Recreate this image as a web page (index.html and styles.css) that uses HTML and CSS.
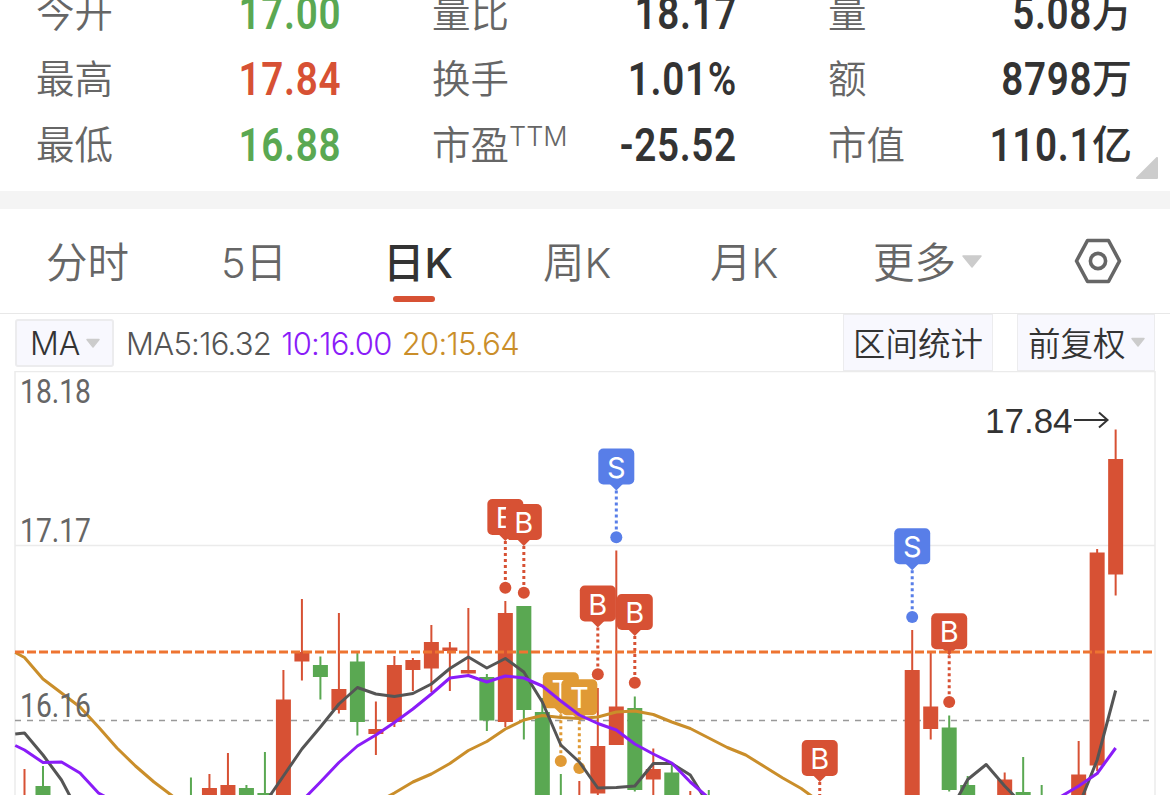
FILE: index.html
```html
<!DOCTYPE html>
<html lang="zh-CN">
<head>
    <meta charset="UTF-8">
    <meta name="viewport" content="width=device-width, initial-scale=1.0">
    <title>日K</title>
    <link rel="stylesheet" href="styles.css">
</head>
<body>

<section class="quote">
    <div class="item"><span class="label">今开</span><span class="value down"><b>17.00</b></span></div>
    <div class="item"><span class="label">量比</span><span class="value"><b>18.17</b></span></div>
    <div class="item"><span class="label">量</span><span class="value"><b>5.08</b>万</span></div>
    <div class="item"><span class="label">最高</span><span class="value up"><b>17.84</b></span></div>
    <div class="item"><span class="label">换手</span><span class="value"><b>1.01%</b></span></div>
    <div class="item"><span class="label">额</span><span class="value"><b>8798</b>万</span></div>
    <div class="item"><span class="label">最低</span><span class="value down"><b>16.88</b></span></div>
    <div class="item"><span class="label">市盈<sup>TTM</sup></span><span class="value"><b>-25.52</b></span></div>
    <div class="item"><span class="label">市值</span><span class="value"><b>110.1</b>亿</span></div>
    <svg class="corner" width="22" height="22" viewBox="0 0 22 22"><path d="M21 1V21H1Z"/></svg>
</section>

<nav class="tabs">
    <a>分时</a>
    <a>5日</a>
    <a class="active">日K</a>
    <a>周K</a>
    <a>月K</a>
    <a>更多<svg class="arrow" width="22" height="14" viewBox="0 0 22 14"><path d="M2 1H20L11 12Z"/></svg></a>
    <svg class="setting" width="48" height="46" viewBox="0 0 48 46">
        <path d="M13.5 2.5H34.5L45.5 23L34.5 43.5H13.5L2.5 23Z"/>
        <circle cx="24" cy="23" r="7.6"/>
    </svg>
</nav>

<div class="toolbar">
    <div class="btn ma-btn">MA<svg class="arrow" width="16" height="11" viewBox="0 0 16 11"><path d="M2 1.500H14L8 9Z"/></svg></div>
    <span class="ma ma5">MA5:16.32</span>
    <span class="ma ma10">10:16.00</span>
    <span class="ma ma20">20:15.64</span>
    <div class="btn range-btn">区间统计</div>
    <div class="btn right-btn">前复权<svg class="arrow" width="16" height="11" viewBox="0 0 16 11"><path d="M2 1.500H14L8 9Z"/></svg></div>
</div>

<svg id="chart" width="1170" height="424" viewBox="0 371 1170 424"></svg>

<script src="chart.js"></script>
</body>
</html>
```
FILE: styles.css
```css
* {
    margin: 0;
    padding: 0;
    box-sizing: border-box;
}
body {
    width: 1170px;
    height: 795px;
    overflow: hidden;
    background-color: #fff;
    color: #333;
    font-family: Inter, 'Noto Sans CJK SC', sans-serif;
}

/* quote */
.quote {
    position: relative;
    display: grid;
    grid-template-columns: 305px 305px 304px;
    grid-auto-rows: 66px;
    column-gap: 91px;
    height: 229px;
    margin-top: -20px;
    padding-left: 36px;
    border-bottom: 18px solid #f4f4f4;
}
.item {
    display: flex;
    justify-content: space-between;
    align-items: center;
    line-height: 64px;
    white-space: nowrap;
}
.label {
    font-size: 38.5px;
    font-weight: 350;
    color: #666;
}
.label sup {
    display: inline-block;
    font-size: 27px;
    font-weight: 300;
    line-height: 1;
    vertical-align: 13px;
}
.value {
    display: flex;
    font-size: 40px;
    font-weight: 500;
}
.value b {
    font-family: Roboto, sans-serif;
    font-size: 46px;
    font-weight: 600;
    letter-spacing: 0.8px;
    transform: scaleX(0.84);
    transform-origin: right;
}
.up {
    color: #d75134;
}
.down {
    color: #5aa852;
}
.corner {
    position: absolute;
    right: 12px;
    bottom: 12px;
    fill: #ccc;
    stroke: #ccc;
    stroke-width: 2;
    stroke-linejoin: round;
}

/* tabs */
.tabs {
    display: grid;
    grid-template-columns: 175px 162px 160px 167px 163px 201px auto;
    align-items: center;
    height: 105px;
    padding-left: 46px;
    border-bottom: 1px solid #e8e8e8;
}
.tabs a {
    position: relative;
    justify-self: start;
    display: flex;
    align-items: center;
    padding-top: 4px;
    font-size: 41.5px;
    font-weight: 350;
    line-height: 100px;
    color: #666;
    white-space: nowrap;
}
.tabs .active {
    font-weight: 500;
    color: #333;
}
.active::after {
    content: '';
    position: absolute;
    left: 10px;
    bottom: 11px;
    width: 42px;
    height: 6px;
    border-radius: 3px;
    background-color: #d75134;
}
.arrow {
    flex: none;
    fill: #ccc;
    stroke: #ccc;
    stroke-width: 1.5;
    stroke-linejoin: round;
}
.tabs .arrow {
    margin: -3px 0 0 5px;
}
.setting {
    fill: none;
    stroke: #666;
    stroke-width: 3.6;
    stroke-linejoin: round;
}

/* toolbar */
.toolbar {
    display: flex;
    align-items: center;
    height: 57px;
    padding: 0 15px;
    font-size: 32px;
    white-space: nowrap;
}
.btn {
    display: flex;
    align-items: center;
    height: 57px;
    border: 1.5px solid #ececee;
    background-color: #f8f8fe;
}
.ma-btn {
    width: 99px;
    height: 48px;
    margin: 1px 12px 0 0;
    padding-left: 13px;
    border-width: 2px;
    border-radius: 3px;
    font-weight: 350;
}
.ma-btn .arrow {
    margin-left: 5px;
}
.ma {
    margin-right: 10px;
    padding-top: 2px;
    font-size: 31px;
    font-weight: 350;
    letter-spacing: -0.7px;
}
.ma5 {
    color: #555;
}
.ma10 {
    color: #8a1cf8;
}
.ma20 {
    color: #ca8e2a;
}
.range-btn,
.right-btn {
    padding-bottom: 3px;
    font-size: 32.5px;
    font-weight: 350;
}
.range-btn {
    width: 150px;
    margin-left: auto;
    padding-left: 9px;
}
.right-btn {
    width: 138px;
    margin-left: 24px;
    padding-left: 10px;
}
.right-btn .arrow {
    margin: 3px 0 0 4px;
}

/* chart */
#chart {
    display: block;
}
.frame {
    fill: none;
    stroke: #ebebeb;
    stroke-width: 1.5;
}
.mid {
    stroke: #999;
    stroke-width: 1.3;
    stroke-dasharray: 6 6;
}
.cost {
    stroke: #ee7431;
    stroke-width: 3;
    stroke-dasharray: 9 3;
}
.line {
    fill: none;
    stroke-width: 3;
    stroke-linejoin: round;
}
.axis {
    font-family: Roboto, sans-serif;
    font-size: 34px;
    fill: #666;
}
.peak {
    font-family: 'Liberation Sans', sans-serif;
    font-size: 35px;
    fill: #333;
}
.peak-arrow {
    fill: none;
    stroke: #333;
    stroke-width: 2;
}
.mark-text {
    font-family: Inter, sans-serif;
    font-size: 29px;
    fill: #fff;
    text-anchor: middle;
}
```
FILE: chart.js
```js
const RED = '#d75134';
const GREEN = '#5aa852';
const BLUE = '#587ee8';
const GOLD = '#e09a35';

const px = i => 24.5 + i * 18.494;

// index, color, high, body top, body bottom, low
const candles = [
    [0, RED, 769, 800, 810, 810],
    [1, GREEN, 766, 786, 810, 810],
    [9, GREEN, 777.5, 800, 810, 810],
    [10, RED, 774, 788, 810, 810],
    [11, RED, 753, 785, 810, 810],
    [12, GREEN, 785, 788, 810, 810],
    [13, GREEN, 752, 793, 810, 810],
    [14, RED, 670, 699.5, 810, 810],
    [15, RED, 599, 652, 661.5, 680.5],
    [16, GREEN, 656.5, 665, 677, 699.5],
    [17, RED, 613, 689, 710, 713.5],
    [18, GREEN, 653, 661.5, 722, 735.5],
    [19, RED, 701.5, 729, 734, 755],
    [20, RED, 656, 665, 722, 727],
    [21, RED, 658, 660, 670, 691],
    [22, RED, 625, 642, 668.5, 692],
    [23, RED, 642, 647.5, 651, 691],
    [24, RED, 608, 670, 673.5, 673.5],
    [25, GREEN, 674, 677, 720.5, 731],
    [26, RED, 601, 613, 722, 727],
    [27, GREEN, 606, 606, 710, 739.5],
    [28, GREEN, 698, 712, 810, 810],
    [29, GREEN, 774, 800, 810, 810],
    [30, RED, 781, 800, 810, 810],
    [31, RED, 688, 746, 793.5, 795],
    [32, RED, 550.5, 706.5, 745, 745],
    [33, GREEN, 696.5, 708, 790, 791.5],
    [34, RED, 748.5, 769, 779.5, 795],
    [35, GREEN, 763, 772.5, 810, 810],
    [36, RED, 791, 800, 810, 810],
    [37, GREEN, 790, 800, 810, 810],
    [48, RED, 630, 670, 810, 810],
    [49, RED, 652, 706.5, 729, 739.5],
    [50, GREEN, 715.5, 727.5, 790, 791.5],
    [51, GREEN, 776, 785, 810, 810],
    [53, RED, 772.5, 779.5, 810, 810],
    [54, GREEN, 757, 792, 810, 810],
    [55, GREEN, 785, 800, 810, 810],
    [57, RED, 741, 774.5, 810, 810],
    [58, RED, 549, 552.5, 765.5, 771],
    [59, RED, 429.5, 459, 574.5, 595.5]
];

// color, then pairs of first index and values
const lines = [
    ['#ca8e2a', -0.5, [652.5], 0, [657.5, 679, 693, 707, 727, 748, 766, 782, 796]],
    ['#ca8e2a', 19, [803, 793, 782, 774, 763.5, 750.5, 741.5, 729, 720, 715.5, 717.5, 718.5, 717, 712, 711, 714.5, 722, 728.5, 738, 747.5, 755, 766.5, 778, 788.5, 802]],
    ['#555', -0.5, [734], 0, [733, 755, 780, 815]],
    ['#555', 13, [803, 776, 749, 727, 704, 687.5, 694, 696.5, 693.5, 684, 668.5, 657, 668, 658.5, 672, 702, 745, 762, 788, 787.5, 786, 763.5, 763.5, 775, 805]],
    ['#555', 50, [813, 779.5, 764.5, 786, 805]],
    ['#555', 57, [806, 760, 690.5]],
    ['#8a1cf8', -0.5, [745.5], 0, [750, 762.5, 762, 773, 793, 803]],
    ['#8a1cf8', 15, [801, 782, 762.5, 746, 735, 722.5, 709, 694, 678, 675.5, 682, 676, 678, 686, 701, 715, 723.5, 730, 744, 754, 763, 782, 798]],
    ['#8a1cf8', 56, [797, 786, 773.5, 748]]
];

// index, text, color, top
const marks = [
    [26, 'B', RED, 499],
    [27, 'B', RED, 504],
    [32, 'S', BLUE, 448.5],
    [31, 'B', RED, 585.5],
    [33, 'B', RED, 594],
    [29, 'T', GOLD, 672.3],
    [30, 'T', GOLD, 679.3],
    [43, 'B', RED, 740],
    [48, 'S', BLUE, 528.3],
    [50, 'B', RED, 613.3]
];

let html = `
    <path class="frame" d="M15 800V371.500H1155V800M15 545.500H1155"/>
    <path class="mid" d="M15 720.500H1152"/>`;

candles.forEach(([i, color, high, top, bottom, low]) => {
    const x = px(i);
    html += `<rect x="${x - 1}" y="${high}" width="2" height="${low - high}" fill="${color}"/>
        <rect x="${x - 7.5}" y="${top}" width="15" height="${bottom - top}" fill="${color}"/>`;
});

marks.forEach(([i, text, color, top]) => {
    const x = px(i);
    html += `<rect x="${x - 18}" y="${top}" width="36" height="36" rx="5" fill="${color}"/>
        <path d="M${x - 6.5} ${top + 35.5}h13l-6.5 6.500Z" fill="${color}"/>
        <path d="M${x} ${top + 42}V${top + 84}" stroke="${color}" stroke-width="3" stroke-dasharray="3 3"/>
        <circle cx="${x}" cy="${top + 88.7}" r="6" fill="${color}"/>
        <text class="mark-text" x="${x}" y="${top + 29}">${text}</text>`;
});

lines.forEach(([color, ...parts]) => {
    const points = [];
    for (let p = 0; p < parts.length; p += 2) {
        parts[p + 1].forEach((y, n) => points.push(px(parts[p] + n) + ',' + y));
    }
    html += `<polyline class="line" stroke="${color}" points="${points.join(' ')}"/>`;
});

html += '<path class="cost" d="M15 652H1152"/>';

[['18.18', 403], ['17.17', 542], ['16.16', 717]].forEach(([text, y]) => {
    html += `<text class="axis" x="20" y="${y}" textLength="71" lengthAdjust="spacingAndGlyphs">${text}</text>`;
});

html += `<text class="peak" x="985" y="433">17.84</text>
    <path class="peak-arrow" d="M1074 420H1107M1099 412.500L1107.500 420L1099 427.500"/>`;

document.getElementById('chart').innerHTML = html;
```
